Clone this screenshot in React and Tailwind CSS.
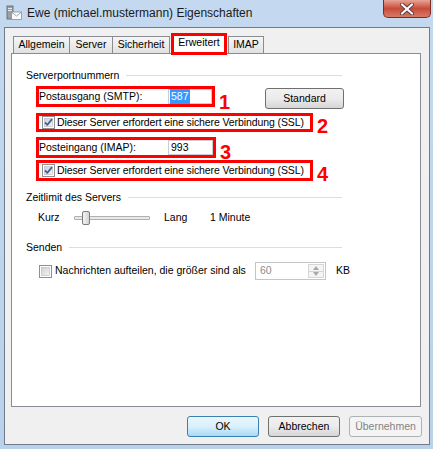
import React from 'react';

const font = { fontFamily: '"Liberation Sans", Arial, sans-serif' };

const CheckBox = ({ checked }) => (
  <svg width="13" height="13" viewBox="0 0 13 13" className="shrink-0">
    <defs>
      <linearGradient id={checked ? 'cbg1' : 'cbg0'} x1="0" y1="0" x2="1" y2="1">
        <stop offset="0" stopColor="#cbcfd5" />
        <stop offset="1" stopColor="#f6f6f6" />
      </linearGradient>
    </defs>
    <rect x="0.5" y="0.5" width="12" height="12" fill="#fff" stroke="#8e8f8f" />
    <rect x="2.5" y="2.5" width="8" height="8" fill={`url(#${checked ? 'cbg1' : 'cbg0'})`} stroke="#b5b8bd" strokeWidth="0.6" />
    {checked && (
      <path d="M3 6.3 L5.3 8.8 L10 3.2" fill="none" stroke="#4a5f97" strokeWidth="1.8" strokeLinejoin="round" />
    )}
  </svg>
);

const Tab = ({ label, w, selected, className = '' }) =>
  selected ? (
    <div
      className={`relative z-10 -mb-[2px] flex h-[22px] items-center justify-center border-[3px] border-[#ff0000] bg-white pb-[3px] ${className}`}
      style={{ width: w }}
    >
      {label}
    </div>
  ) : (
    <div
      className={`flex h-[17px] items-center justify-center border border-b-0 border-[#898c95] bg-gradient-to-b from-[#f6f6f6] to-[#e1e1e1] ${className}`}
      style={{ width: w }}
    >
      {label}
    </div>
  );

const GroupHead = ({ title }) => (
  <div className="flex h-[12px] w-[316px] items-center leading-[12px]">
    <span>{title}</span>
    <div className="ml-[7px] h-px flex-1 bg-[#d5dfe5]" />
  </div>
);

const Num = ({ n, className = '' }) => (
  <span className={`ml-[4px] self-end text-[20px] font-bold leading-none text-[#ff0000] ${className}`}>
    {n}
  </span>
);

const WinButton = ({ children, variant = 'normal', className = '' }) => {
  const styles = {
    normal: 'border-[#707070] bg-gradient-to-b from-[#f2f2f2] via-[#ebebeb] to-[#d6d6d6] text-black',
    default: 'border-[#3c7fb1] bg-gradient-to-b from-[#eaf6fd] via-[#d9f0fc] to-[#a7d9f5] text-black',
    disabled: 'border-[#adb2b5] bg-[#f4f4f4] text-[#838383]',
  };
  return (
    <div
      className={`flex h-[21px] items-center justify-center rounded-[3px] border ${styles[variant]} ${className}`}
    >
      {children}
    </div>
  );
};

export default function App() {
  return (
    <div
      className="flex h-[449px] w-[433px] flex-col whitespace-nowrap bg-gradient-to-b from-[#c4d9ef] to-[#b9d1ea] text-[10.5px] text-black"
      style={font}
    >
      {/* title bar */}
      <div className="flex h-[27px] shrink-0 items-start pl-[6px] pr-[2px]">
        <svg width="16" height="16" viewBox="0 0 16 16" className="mt-[5px]">
          <rect x="1" y="1" width="6" height="13" fill="#9aa0a6" stroke="#5d6369" strokeWidth="0.8" />
          <rect x="2" y="3" width="4" height="1" fill="#e6e9ec" />
          <rect x="2" y="5" width="4" height="1" fill="#e6e9ec" />
          <rect x="5.5" y="7" width="10" height="7.5" fill="#fafafa" stroke="#8a8f94" strokeWidth="0.8" />
          <path d="M5.8 7.3 L10.5 11 L15.2 7.3" fill="none" stroke="#8a8f94" strokeWidth="0.8" />
        </svg>
        <span className="ml-[5px] mt-[6px] text-[12px] leading-[14px] text-[#1a1a1a]">
          Ewe (michael.mustermann) Eigenschaften
        </span>
        <div className="ml-auto flex h-[18px] w-[48px] items-center justify-center rounded-b-[5px] border border-t-0 border-[#7a2c23] bg-gradient-to-b from-[#e6a496] via-[#c74a3a] to-[#d77a67]">
          <svg width="16" height="12" viewBox="0 0 16 12">
            <path d="M3 1.5 L13 10.5 M13 1.5 L3 10.5" stroke="#5a3a36" strokeWidth="4" strokeLinecap="round" />
            <path d="M3 1.5 L13 10.5 M13 1.5 L3 10.5" stroke="#ffffff" strokeWidth="2.2" strokeLinecap="round" />
          </svg>
        </div>
      </div>

      {/* client area */}
      <div className="mb-[4px] ml-[4px] mr-[3px] flex flex-1 flex-col border border-[#6f7b88] bg-[#f0f0f0]">
        {/* tabs */}
        <div className="ml-[8px] mt-[5px] flex h-[20px] items-end">
          <Tab label="Allgemein" w={57} />
          <Tab label="Server" w={44} className="-ml-px" />
          <Tab label="Sicherheit" w={58} className="-ml-px" />
          <Tab label="Erweitert" w={56} selected className="ml-px" />
          <Tab label="IMAP" w={36} className="ml-px" />
        </div>

        {/* panel */}
        <div className="ml-[6px] flex h-[354px] w-[410px] flex-col border border-[#898c95] bg-white">
          <div className="ml-[14px] flex flex-col">
            <div className="mt-[15px]">
              <GroupHead title="Serverportnummern" />
            </div>

            {/* row 1 */}
            <div className="ml-[10px] mt-[5px] flex w-[308px] items-start">
              <div className="flex h-[21px] w-[179px] items-center border-[3px] border-[#ff0000]">
                <span>Postausgang (SMTP):</span>
                <div className="ml-auto flex h-full w-[44px] items-center border border-[#c9ccd2] pl-[1px]">
                  <span className="bg-[#3399ff] px-[1px] text-white">587</span>
                </div>
              </div>
              <Num n="1" className="-mb-[3px]" />
              <WinButton className="ml-auto mt-[2px] w-[79px]">Standard</WinButton>
            </div>

            {/* row 2 */}
            <div className="ml-[10px] mt-[4px] flex items-start">
              <div className="flex h-[19px] w-[277px] items-center border-[3px] border-[#ff0000]">
                <span className="ml-[3px] flex">
                  <CheckBox checked />
                </span>
                <span className="ml-[2px] tracking-[-0.1px]">Dieser Server erfordert eine sichere Verbindung (SSL)</span>
              </div>
              <Num n="2" className="-mb-[4px]" />
            </div>

            {/* row 3 */}
            <div className="ml-[10px] mt-[5px] flex items-start">
              <div className="flex h-[21px] w-[180px] items-center border-[3px] border-[#ff0000]">
                <span>Posteingang (IMAP):</span>
                <div className="ml-auto flex h-full w-[45px] items-center border border-[#c9ccd2] pl-[2px]">
                  993
                </div>
              </div>
              <Num n="3" className="-mb-[4px]" />
            </div>

            {/* row 4 */}
            <div className="ml-[10px] mt-[2px] flex items-start">
              <div className="flex h-[21px] w-[277px] items-center border-[3px] border-[#ff0000]">
                <span className="ml-[3px] flex">
                  <CheckBox checked />
                </span>
                <span className="ml-[2px] tracking-[-0.1px]">Dieser Server erfordert eine sichere Verbindung (SSL)</span>
              </div>
              <Num n="4" className="-mb-[3px]" />
            </div>

            <div className="mt-[10px]">
              <GroupHead title="Zeitlimit des Servers" />
            </div>

            {/* slider row */}
            <div className="ml-[12px] mt-[8px] flex h-[14px] items-center">
              <span className="w-[36px]">Kurz</span>
              <div className="relative flex h-[14px] w-[76px] items-center">
                <div className="h-[4px] w-full rounded-[1px] border border-[#b0b0b0] bg-[#e7eaea]" />
                <div className="absolute left-[8px] top-0 h-[14px] w-[8px] rounded-[2px] border border-[#7c7c7c] bg-gradient-to-r from-[#f4f4f4] to-[#d4d4d4]" />
              </div>
              <span className="ml-[14px] w-[46px]">Lang</span>
              <span>1 Minute</span>
            </div>

            <div className="mt-[16px]">
              <GroupHead title="Senden" />
            </div>

            {/* split row */}
            <div className="ml-[13px] mt-[9px] flex h-[18px] items-center">
              <div className="flex w-[216px] items-center">
                <CheckBox />
                <span className="ml-[3px]">Nachrichten aufteilen, die größer sind als</span>
              </div>
              <div className="flex h-[18px] w-[71px] items-stretch border border-[#c5c5c5] bg-white">
                <span className="flex flex-1 items-center pl-[4px] text-[#8c8c8c]">60</span>
                <div className="my-[1px] mr-[1px] flex w-[16px] flex-col border border-[#d6d6d6] bg-[#f4f4f4]">
                  <div className="flex flex-1 items-center justify-center border-b border-[#d6d6d6]">
                    <svg width="6" height="4" viewBox="0 0 6 4"><path d="M0 4 L3 0 L6 4 Z" fill="#a8a8a8" /></svg>
                  </div>
                  <div className="flex flex-1 items-center justify-center">
                    <svg width="6" height="4" viewBox="0 0 6 4"><path d="M0 0 L3 4 L6 0 Z" fill="#a8a8a8" /></svg>
                  </div>
                </div>
              </div>
              <span className="ml-[10px]">KB</span>
            </div>
          </div>
        </div>

        {/* buttons */}
        <div className="mr-[7px] mt-[9px] flex justify-end gap-[9px]">
          <WinButton variant="default" className="w-[72px]">OK</WinButton>
          <WinButton className="w-[72px]">Abbrechen</WinButton>
          <WinButton variant="disabled" className="w-[73px]">Übernehmen</WinButton>
        </div>
      </div>
    </div>
  );
}
